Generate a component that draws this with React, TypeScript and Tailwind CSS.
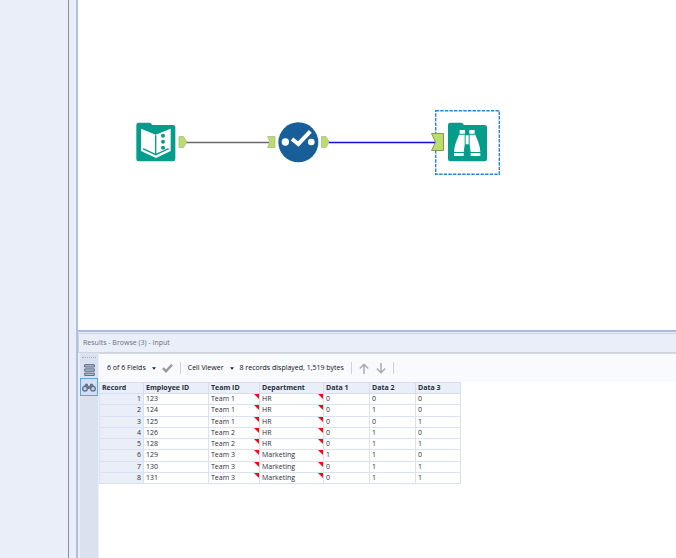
import type { ReactNode } from "react";

const columns = [
  { name: "Record", width: "w-[44px]" },
  { name: "Employee ID", width: "w-[65px]" },
  { name: "Team ID", width: "w-[51px]" },
  { name: "Department", width: "w-[64px]" },
  { name: "Data 1", width: "w-[46px]" },
  { name: "Data 2", width: "w-[46px]" },
  { name: "Data 3", width: "w-[45px]" },
];

const rows = [
  ["123", "Team 1", "HR", "0", "0", "0"],
  ["124", "Team 1", "HR", "0", "1", "0"],
  ["125", "Team 1", "HR", "0", "0", "1"],
  ["126", "Team 2", "HR", "0", "1", "0"],
  ["128", "Team 2", "HR", "0", "1", "1"],
  ["129", "Team 3", "Marketing", "1", "1", "0"],
  ["130", "Team 3", "Marketing", "0", "1", "1"],
  ["131", "Team 3", "Marketing", "0", "1", "1"],
];

const FolderShape = () => (
  <path
    d="M41 38H73q4 0 6 3l3 4h62q7 0 7 7v95q0 7-7 7H41q-7 0-7-7V45q0-7 7-7z"
    fill="#069c8b"
  />
);

const InputToolIcon = () => (
  <svg viewBox="33 36 120 120" className="size-10">
    <FolderShape />
    <path d="M48 56 92 74 137 56V123L93 144 48 123z" fill="#fff" />
    <path
      d="M54 116 92 134 131 116M92 76V134"
      fill="none"
      stroke="#069c8b"
      strokeWidth="4"
    />
    <g fill="#069c8b">
      <circle cx="114" cy="77" r="6" />
      <circle cx="114" cy="95" r="6" />
      <circle cx="114" cy="113" r="6" />
    </g>
  </svg>
);

const SelectToolIcon = () => (
  <svg viewBox="51 33 126 126" className="size-[42px]">
    <circle cx="115" cy="97" r="60" fill="#185f9a" />
    <circle cx="76" cy="96" r="11" fill="#fff" />
    <circle cx="154" cy="96" r="10" fill="#fff" />
    <path d="M96 87 115 102 151 64" fill="none" stroke="#fff" strokeWidth="12" />
  </svg>
);

const BrowseToolIcon = () => (
  <svg viewBox="81 66 120 120" className="size-10">
    <g transform="translate(50 30)">
      <FolderShape />
    </g>
    <g fill="#fff">
      <path d="M119 90h16v11h-16zM148 90h16v11h-16zM137 106h9v27h-9z" />
      <path d="M117 104h17v31l-3 21h-29q1-16 6-29zM149 104h17l9 23q5 13 6 29h-29l-3-21z" />
      <path d="M102 159h29v9h-29zM152 159h29v9h-29z" />
    </g>
  </svg>
);

const Wires = () => (
  <svg className="absolute left-0 top-0 h-full w-full" aria-hidden="true">
    <path d="M108 142.500H191" stroke="#6d666b" strokeWidth="1.3" />
    <g fill="#bbdd69" stroke="#a3b98a" strokeWidth="0.7">
      <path d="M101 136.500H105.500L108.800 142 105.500 147.500H101z" />
      <path d="M189.500 136.500H197V147.500H189.500L192 142z" />
      <path d="M243.500 136.500H248L251.300 142 248 147.500H243.500z" />
      <path
        d="M353.500 133.500H365.500V150.500H353.500L357.500 142z"
        stroke="#87985c"
        strokeWidth="1"
      />
    </g>
    <path d="M251 142.500H357" stroke="#0f0fee" strokeWidth="1.4" />
  </svg>
);

const Canvas = () => (
  <main className="relative h-[330px] overflow-hidden bg-white">
    <div className="absolute left-[357px] top-[110px] size-[65px]">
      <svg className="h-full w-full" aria-hidden="true">
        <rect
          x="0.7"
          y="0.7"
          width="63.6"
          height="63.6"
          fill="none"
          stroke="#2684dc"
          strokeWidth="1.4"
          strokeDasharray="3.400 1.200"
        />
      </svg>
    </div>
    <Wires />
    <button aria-label="Input" className="absolute left-[58px] top-[122px]">
      <InputToolIcon />
    </button>
    <button aria-label="Select" className="absolute left-[199px] top-[121px]">
      <SelectToolIcon />
    </button>
    <button aria-label="Browse" className="absolute left-[369px] top-[122px]">
      <BrowseToolIcon />
    </button>
  </main>
);

const MenuButton = ({ children }: { children: ReactNode }) => (
  <button className="flex items-center gap-1.5 whitespace-nowrap">
    {children}
    <svg viewBox="0 0 5 3" className="h-[3px] w-[4px]">
      <path d="M0 0H5L2.500 3z" fill="#222" />
    </svg>
  </button>
);

const Separator = () => <span className="h-3 w-px bg-[#cdd1d8]" />;

const Toolbar = () => (
  <div className="flex h-[29px] items-center border-t border-[#d3d8e2] bg-[#f8fafe] pl-2 text-[7px] text-[#111]">
    <MenuButton>6 of 6 Fields</MenuButton>
    <button aria-label="Apply" className="ml-1.5 mr-[7px]">
      <svg viewBox="0 0 11 10" className="h-[10px] w-[11px]">
        <path d="M1 5.200 4 8.200 10 1.800" fill="none" stroke="#999" strokeWidth="2.400" />
      </svg>
    </button>
    <Separator />
    <div className="ml-[7px] mr-1.5">
      <MenuButton>Cell Viewer</MenuButton>
    </div>
    <span className="whitespace-nowrap">8 records displayed, 1,519 bytes</span>
    <div className="ml-[7px] flex items-center gap-[7px]">
      <Separator />
      <button aria-label="Previous">
        <svg viewBox="0 0 10 11" className="h-[11px] w-[10px]">
          <path d="M5 11V1.500M0.800 5.500 5 1.200 9.200 5.500" fill="none" stroke="#aaa" strokeWidth="1.500" />
        </svg>
      </button>
      <button aria-label="Next">
        <svg viewBox="0 0 10 11" className="h-[11px] w-[10px]">
          <path d="M5 0V9.500M0.800 5.500 5 9.800 9.200 5.500" fill="none" stroke="#aaa" strokeWidth="1.500" />
        </svg>
      </button>
      <Separator />
    </div>
  </div>
);

const ResultsTable = () => (
  <table className="h-[102px] table-fixed border-collapse text-left text-[7px] leading-[10px] text-[#2c2c38]">
    <thead>
      <tr className="bg-[#e9eef9] text-[#282e3c]">
        {columns.map((c) => (
          <th key={c.name} className={`${c.width} border border-[#d5def0] px-0.5 font-bold`}>
            {c.name}
          </th>
        ))}
      </tr>
    </thead>
    <tbody>
      {rows.map((row, i) => (
        <tr key={row[0]}>
          <td className="border border-[#d9e1f2] bg-[#e9eef9] px-0.5 text-right">{i + 1}</td>
          {row.map((value, j) => (
            <td key={j} className="relative border border-[#d9e1f2] px-0.5">
              {value}
              {(j === 1 || j === 2) && (
                <span className="absolute right-0 top-0 border-l-5 border-t-5 border-l-transparent border-t-[#f00a14]" />
              )}
            </td>
          ))}
        </tr>
      ))}
    </tbody>
  </table>
);

const SideTabs = () => (
  <div className="flex w-[19px] shrink-0 flex-col items-center border-r border-[#e9eef9] bg-[#dbe2ef] pt-1">
    <span className="w-[14px] border-t border-dotted border-[#a3acbb]" />
    <button aria-label="Messages" className="flex h-5 w-[18px] items-center justify-center pt-1">
      <svg viewBox="0 0 11 12" className="h-3 w-[11px]">
        <path
          d="M0.700 0.700H10.300V3H0.700zM0.700 4.900H10.300V7.200H0.700zM0.700 9.100H10.300V11.400H0.700z"
          fill="#b9c5da"
          stroke="#56647f"
          strokeWidth="1"
        />
      </svg>
    </button>
    <button
      aria-label="Data"
      className="flex h-[18px] w-[18px] items-center justify-center border border-[#5ba7e8] bg-[#d3dff1]"
    >
      <svg viewBox="0 0 42 27" className="h-[9px] w-[14px]">
        <path
          d="M3 14 10 3q4-3 8 1v4h6V4q4-4 8-1l7 11-9-3-5 7h-8l-5-7z"
          fill="#66738e"
        />
        <circle cx="9" cy="17" r="7" fill="#c4cfe1" stroke="#66738e" strokeWidth="4" />
        <circle cx="33" cy="17" r="7" fill="#c4cfe1" stroke="#66738e" strokeWidth="4" />
      </svg>
    </button>
  </div>
);

const ResultsPanel = () => (
  <section className="flex flex-1 flex-col border-t-2 border-[#a9bbdd] bg-[#e9eef9]">
    <h2 className="mt-px border border-r-0 border-[#cfd4de] pl-1 text-[7px] leading-[18px] text-[#6b707a]">
      Results - Browse (3) - Input
    </h2>
    <div className="flex flex-1 pl-0.5">
      <SideTabs />
      <div className="flex-1 bg-white">
        <Toolbar />
        <ResultsTable />
      </div>
    </div>
  </section>
);

export default function App() {
  return (
    <div className="flex min-h-screen bg-[#e9eef9] font-['Open_Sans','Noto_Sans',sans-serif]">
      <aside className="w-[69px] shrink-0 border-r border-[#8d9097]" />
      <div className="w-[7px] shrink-0" />
      <div className="flex min-w-0 flex-1 flex-col border-l-2 border-[#b1c0df]">
        <Canvas />
        <ResultsPanel />
      </div>
    </div>
  );
}
